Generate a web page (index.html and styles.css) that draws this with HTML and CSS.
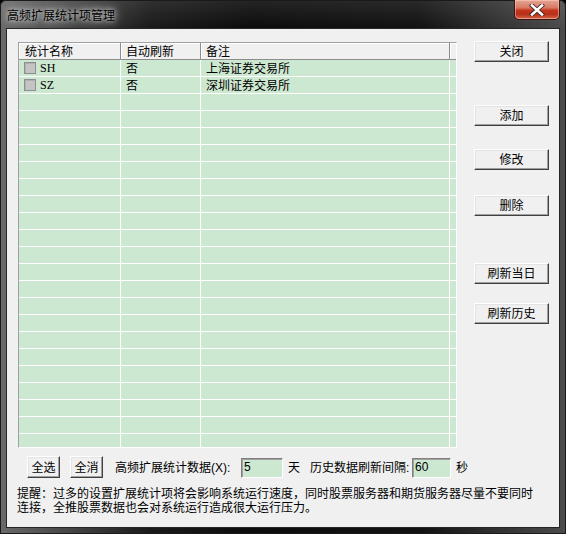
FILE: index.html
```html
<!DOCTYPE html>
<html>
<head>
<meta charset="utf-8">
<link rel="stylesheet" href="styles.css">
</head>
<body>
<div class="window">
  <div class="titlebar">
    <span class="title">高频扩展统计项管理</span>
    <div class="close">
      <svg width="18" height="12" viewBox="0 0 18 12">
        <path d="M4 1.5 L14 10.5 M14 1.5 L4 10.5" stroke="#3a2020" stroke-width="4.2" stroke-linecap="square" fill="none"/>
        <path d="M4 1.5 L14 10.5 M14 1.5 L4 10.5" stroke="#ffffff" stroke-width="2.6" stroke-linecap="square" fill="none"/>
      </svg>
    </div>
  </div>
  <div class="client">
    <div class="main">
      <div class="list">
        <div class="hdr">
          <div class="hc c1">统计名称</div>
          <div class="hc c2">自动刷新</div>
          <div class="hc c3">备注</div>
          <div class="hc c4"></div>
        </div>
        <div class="row"><div class="cell c1"><span class="chk"></span><span class="code">SH</span></div><div class="cell c2">否</div><div class="cell c3">上海证券交易所</div><div class="cell c4"></div></div>
        <div class="row"><div class="cell c1"><span class="chk"></span><span class="code">SZ</span></div><div class="cell c2">否</div><div class="cell c3">深圳证券交易所</div><div class="cell c4"></div></div>
        <div class="row"><div class="cell c1"></div><div class="cell c2"></div><div class="cell c3"></div><div class="cell c4"></div></div>
        <div class="row"><div class="cell c1"></div><div class="cell c2"></div><div class="cell c3"></div><div class="cell c4"></div></div>
        <div class="row"><div class="cell c1"></div><div class="cell c2"></div><div class="cell c3"></div><div class="cell c4"></div></div>
        <div class="row"><div class="cell c1"></div><div class="cell c2"></div><div class="cell c3"></div><div class="cell c4"></div></div>
        <div class="row"><div class="cell c1"></div><div class="cell c2"></div><div class="cell c3"></div><div class="cell c4"></div></div>
        <div class="row"><div class="cell c1"></div><div class="cell c2"></div><div class="cell c3"></div><div class="cell c4"></div></div>
        <div class="row"><div class="cell c1"></div><div class="cell c2"></div><div class="cell c3"></div><div class="cell c4"></div></div>
        <div class="row"><div class="cell c1"></div><div class="cell c2"></div><div class="cell c3"></div><div class="cell c4"></div></div>
        <div class="row"><div class="cell c1"></div><div class="cell c2"></div><div class="cell c3"></div><div class="cell c4"></div></div>
        <div class="row"><div class="cell c1"></div><div class="cell c2"></div><div class="cell c3"></div><div class="cell c4"></div></div>
        <div class="row"><div class="cell c1"></div><div class="cell c2"></div><div class="cell c3"></div><div class="cell c4"></div></div>
        <div class="row"><div class="cell c1"></div><div class="cell c2"></div><div class="cell c3"></div><div class="cell c4"></div></div>
        <div class="row"><div class="cell c1"></div><div class="cell c2"></div><div class="cell c3"></div><div class="cell c4"></div></div>
        <div class="row"><div class="cell c1"></div><div class="cell c2"></div><div class="cell c3"></div><div class="cell c4"></div></div>
        <div class="row"><div class="cell c1"></div><div class="cell c2"></div><div class="cell c3"></div><div class="cell c4"></div></div>
        <div class="row"><div class="cell c1"></div><div class="cell c2"></div><div class="cell c3"></div><div class="cell c4"></div></div>
        <div class="row"><div class="cell c1"></div><div class="cell c2"></div><div class="cell c3"></div><div class="cell c4"></div></div>
        <div class="row"><div class="cell c1"></div><div class="cell c2"></div><div class="cell c3"></div><div class="cell c4"></div></div>
        <div class="row"><div class="cell c1"></div><div class="cell c2"></div><div class="cell c3"></div><div class="cell c4"></div></div>
        <div class="row"><div class="cell c1"></div><div class="cell c2"></div><div class="cell c3"></div><div class="cell c4"></div></div>
        <div class="row"><div class="cell c1"></div><div class="cell c2"></div><div class="cell c3"></div><div class="cell c4"></div></div>
        <div class="row"><div class="cell c1"></div><div class="cell c2"></div><div class="cell c3"></div><div class="cell c4"></div></div>
      </div>
      <div class="btns">
        <div class="btn b1">关闭</div>
        <div class="btn b2">添加</div>
        <div class="btn b3">修改</div>
        <div class="btn b4">删除</div>
        <div class="btn b5">刷新当日</div>
        <div class="btn b6">刷新历史</div>
      </div>
    </div>
    <div class="ctrl">
      <div class="btn small first">全选</div>
      <div class="btn small second">全消</div>
      <span class="lbl lbl1">高频扩展统计数据<span class="asc">(X):</span></span>
      <div class="inp inp1">5</div>
      <span class="unit">天</span>
      <span class="lbl lbl2">历史数据刷新间隔<span class="asc">:</span></span>
      <div class="inp inp2">60</div>
      <span class="unit">秒</span>
    </div>
    <div class="hint">
      <div class="hline">提醒：过多的设置扩展统计项将会影响系统运行速度，同时股票服务器和期货服务器尽量不要同时</div>
      <div class="hline">连接，全推股票数据也会对系统运行造成很大运行压力。</div>
    </div>
  </div>
</div>
</body>
</html>
```
FILE: styles.css
```css
html, body {
  margin: 0;
  padding: 0;
  background: #000;
}
body {
  width: 566px;
  height: 534px;
  overflow: hidden;
  font-family: "Noto Sans CJK SC", "Noto Sans", sans-serif;
  font-size: 12px;
  color: #000;
}
.window {
  width: 566px;
  height: 534px;
  display: flex;
  flex-direction: column;
  box-sizing: border-box;
  border-radius: 6px 6px 0 0;
  background:
    linear-gradient(180deg, rgba(255,255,255,0.10) 0, rgba(255,255,255,0) 28px),
    linear-gradient(90deg, #6a6a6a 0, #4a4a4a 60px, #1a1a1a 150px, #0c0c0c 250px, #121212 420px, #3a3a3a 520px, #4c4c4c 566px);
  box-shadow: inset 0 0 0 1px #1a1a1a;
}
.titlebar {
  height: 28px;
  position: relative;
  display: flex;
  align-items: center;
  flex: none;
}
.title {
  margin-left: 7px;
  margin-top: 1px;
  padding: 0 4px 0 0;
  line-height: 16px;
  color: #000;
  text-shadow: 0 0 4px #cfcfcf, 0 0 8px #bdbdbd, 0 0 12px #aaaaaa;
}
.close {
  position: absolute;
  right: 6px;
  top: 0;
  width: 46px;
  height: 20px;
  box-sizing: border-box;
  border: 1px solid #3b1510;
  border-top: none;
  border-radius: 0 0 5px 5px;
  background: linear-gradient(180deg, #e5a795 0, #d77a63 40%, #c2351c 55%, #b8301a 75%, #d4674a 100%);
  box-shadow: inset 0 0 0 1px rgba(255,210,200,0.5);
  display: flex;
  align-items: center;
  justify-content: center;
}
.close svg { display: block; }
.client {
  flex: 1;
  margin: 0 6px 6px 6px;
  border: 1px solid #262626;
  background: #f0f0f0;
  padding: 12px 0 0 11px;
  display: flex;
  flex-direction: column;
}
.main {
  display: flex;
  align-items: flex-start;
}
.list {
  margin-top: 1px;
  width: 439px;
  height: 406px;
  box-sizing: border-box;
  border: 1px solid;
  border-color: #a0a0a0 #ffffff #ffffff #a0a0a0;
  background: #cde8d0;
  overflow: hidden;
}
.hdr {
  display: flex;
  height: 17px;
  box-sizing: border-box;
  border-bottom: 1px solid #8c8c8c;
  background: #f0f0f0;
}
.hc {
  height: 16px;
  line-height: 16px;
  box-sizing: border-box;
  border-right: 1px solid #8c8c8c;
  box-shadow: inset 1px 1px 0 #ffffff;
  padding-left: 5px;
  white-space: nowrap;
  overflow: hidden;
}
.hdr .c1 { padding-left: 6px; }
.hdr .c4 { border-right: none; }
.row {
  display: flex;
  height: 17px;
  box-sizing: border-box;
  border-bottom: 1px solid #ffffff;
}
.cell {
  height: 16px;
  line-height: 16px;
  box-sizing: border-box;
  border-right: 1px solid #ffffff;
  padding-left: 5px;
  white-space: nowrap;
  overflow: hidden;
  display: flex;
  align-items: center;
}
.row .c4 { border-right: none; }
.c1 { width: 102px; flex: none; }
.c2 { width: 80px; flex: none; }
.c3 { width: 249px; flex: none; }
.c4 { width: 6px; flex: none; padding-left: 0; }
.chk {
  width: 12px;
  height: 12px;
  box-sizing: border-box;
  border: 1px solid #8e8e8e;
  background: #c4c4c4;
  box-shadow: inset 1px 1px 0 #b0b0b0;
  flex: none;
}
.code {
  margin-left: 4px;
  font-family: "Liberation Serif", serif;
  font-size: 12px;
}
.btns {
  margin-left: 17px;
  display: flex;
  flex-direction: column;
}
.btn {
  width: 75px;
  height: 21px;
  box-sizing: border-box;
  background: #f0f0f0;
  border: 1px solid;
  border-color: #ffffff #404040 #404040 #ffffff;
  box-shadow: inset -1px -1px 0 #a0a0a0, inset 1px 1px 0 #e3e3e3;
  text-align: center;
  line-height: 18px;
  font-size: 12px;
}
.b2 { margin-top: 43px; }
.b3 { margin-top: 23px; }
.b4 { margin-top: 25px; }
.b5 { margin-top: 47px; }
.b6 { margin-top: 19px; }
.ctrl {
  margin-top: 8px;
  display: flex;
  align-items: center;
  height: 22px;
}
.btn.small {
  width: 33px;
  height: 22px;
  line-height: 19px;
}
.first { margin-left: 9px; }
.second { margin-left: 10px; }
.lbl {
  white-space: nowrap;
  line-height: 16px;
}
.lbl1 { margin-left: 12px; width: 126px; }
.lbl2 { margin-left: 10px; width: 102px; }
.asc {
  font-family: "Liberation Sans", sans-serif;
  font-size: 12px;
}
.inp {
  height: 20px;
  box-sizing: border-box;
  margin-top: 1px;
  border: 1px solid;
  border-color: #808080 #ffffff #ffffff #808080;
  box-shadow: inset 1px 1px 0 #a0a0a0;
  background: #cde8d0;
  font-family: "Liberation Sans", sans-serif;
  font-size: 12px;
  line-height: 17px;
  padding-left: 2px;
}
.inp1 { width: 42px; }
.inp2 { width: 39px; }
.unit { margin-left: 5px; line-height: 16px; }
.hint {
  margin-top: 8px;
  margin-left: -1px;
  white-space: nowrap;
}
.hline {
  height: 14px;
  line-height: 14px;
}
```
